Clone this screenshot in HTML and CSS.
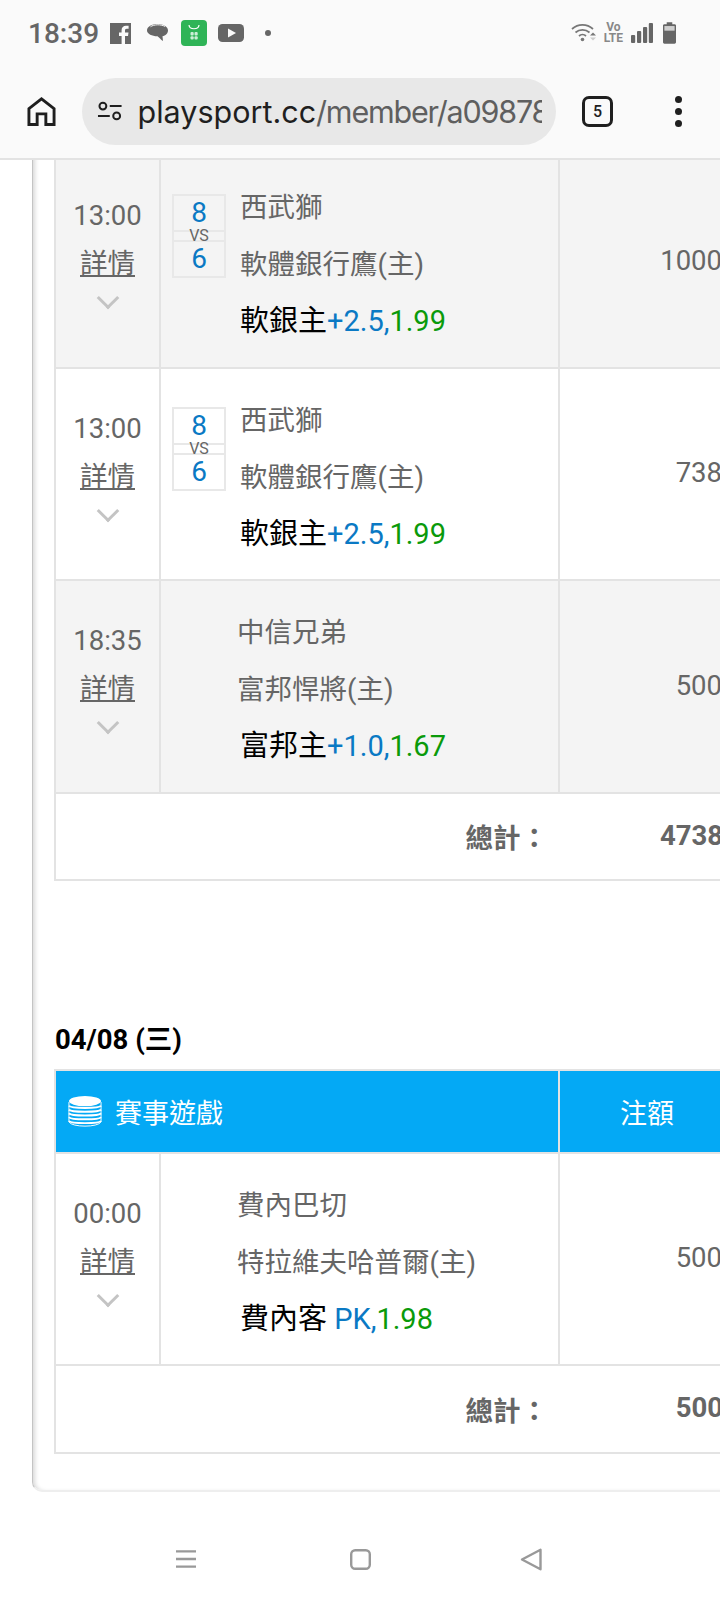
FILE: index.html
```html
<!DOCTYPE html>
<html lang="zh-Hant">
<head>
  <meta charset="UTF-8" />
  <meta name="viewport" content="width=device-width, initial-scale=1.0" />
  <title>playsport.cc</title>
  <link rel="stylesheet" href="styles.css">
</head>
<body>
  <header class="chrome">
    <div class="status-bar">
      <span class="clock">18:39</span>
      <svg class="ic-fb" width="21" height="21" viewBox="0 0 21 21"><path fill="#666" d="M0 0h21v21H15v-8h3l.5-3.4H15V7.5c0-1 .4-1.700 1.800-1.700h1.800V2.800c-.4 0-1.400-.1-2.600-.1-2.600 0-4.400 1.600-4.400 4.500v2.400H9v3.400h2.600v8H0z"/></svg>
      <svg class="ic-msg" width="21" height="20" viewBox="0 0 21 20"><path fill="#666" d="M10.500 1C16 1 21 3.500 21 7.500c0 3-2.500 5-5.500 5.800l.5 4.700c-2-1.200-4-3.500-5.500-4.700C5 13.200 0 11 0 7.500 0 3.500 5 1 10.500 1z"/><path fill="none" stroke="#fafafa" stroke-width="1" d="M3.500 3.800c3-2.400 10-2.800 14.500-.4"/></svg>
      <svg class="ic-store" width="26" height="26" viewBox="0 0 26 26"><rect width="26" height="26" rx="4" fill="#2fb457"/><path fill="none" stroke="#fff" stroke-width="1.200" d="M8 5c.5 5 9.500 5 10 0"/><g fill="#cdeed6"><rect x="9.500" y="12" width="3.200" height="3.400" rx="1"/><rect x="13.500" y="12" width="3.200" height="3.400" rx="1"/><rect x="9.500" y="16.200" width="3.200" height="3.400" rx="1"/><rect x="13.500" y="16.200" width="3.200" height="3.400" rx="1"/></g></svg>
      <svg class="ic-yt" width="26" height="18" viewBox="0 0 26 18"><rect width="26" height="18" rx="4.500" fill="#666"/><path fill="#fafafa" d="M10 4.500l8 4.500-8 4.500z"/></svg>
      <span class="dot"></span>
      <span class="status-right">
        <svg width="25" height="20" viewBox="0 0 25 20"><g fill="none" stroke="#777" stroke-width="1.700"><path d="M1 6c6-5.500 15-5.500 21 0"/><path d="M4.500 9.500c4-3.600 10-3.600 14 0"/><path d="M8 13c2-1.800 5-1.800 7 0"/></g><circle cx="11.500" cy="16.500" r="1.800" fill="#777"/><path fill="#777" d="M19 12.500h6l-3-3z"/><path fill="#ccc" d="M19 14.500h6l-3 3z"/></svg>
        <span class="volte">Vo<br>LTE</span>
        <svg class="ic-signal" width="22" height="20" viewBox="0 0 22 20"><g fill="#666"><rect x="0" y="12" width="4.200" height="8" rx="1"/><rect x="6" y="8" width="4.200" height="12" rx="1"/><rect x="12" y="4" width="4.200" height="16" rx="1"/><rect x="17.800" y="0" width="4.200" height="20" rx="1"/></g></svg>
        <svg width="13" height="22" viewBox="0 0 14 23"><path fill="#666" d="M4 0h6v2h2.500c.8 0 1.500.7 1.500 1.500V21.500c0 .8-.7 1.500-1.500 1.500h-11C.7 23 0 22.300 0 21.500V3.500C0 2.700.7 2 1.500 2H4z"/><rect x="1.500" y="4" width="11" height="5" fill="#cfcfcf"/></svg>
      </span>
    </div>
    <div class="toolbar">
      <svg class="home" width="29" height="31" viewBox="0 0 30 31"><path fill="none" stroke="#1f1f1f" stroke-width="3" d="M2 29V12.500L15 2.500l13 10V29h-8.500v-11h-9v11z"/></svg>
      <div class="omnibox">
        <svg width="26" height="20" viewBox="0 0 26 20"><g fill="none" stroke="#1f1f1f" stroke-width="2"><circle cx="6" cy="5" r="3.500"/><circle cx="20" cy="15" r="3.500"/><path d="M13 5h12M1 15h12"/></g></svg>
        <span class="url"><span class="host">playsport.cc</span>/member/a09878</span>
      </div>
      <span class="tabs">5</span>
      <span class="menu"><i></i><i></i><i></i></span>
    </div>
  </header>

  <main class="viewport">
    <div class="card">
      <table class="bets">
        <colgroup><col class="c-time"><col class="c-game"><col class="c-amount"></colgroup>
        <tr class="alt">
          <td class="time">13:00<a class="more">詳情</a><span class="chev"></span></td>
          <td class="game">
            <div class="game-wrap">
              <div class="score"><b>8</b><em>VS</em><b>6</b></div>
              <div class="teams"><p>西武獅</p><p>軟體銀行鷹(主)</p><p class="pick">軟銀主<span class="line">+2.5,</span><span class="odds">1.99</span></p></div>
            </div>
          </td>
          <td class="amount">1000</td>
        </tr>
        <tr>
          <td class="time">13:00<a class="more">詳情</a><span class="chev"></span></td>
          <td class="game">
            <div class="game-wrap">
              <div class="score"><b>8</b><em>VS</em><b>6</b></div>
              <div class="teams"><p>西武獅</p><p>軟體銀行鷹(主)</p><p class="pick">軟銀主<span class="line">+2.5,</span><span class="odds">1.99</span></p></div>
            </div>
          </td>
          <td class="amount">738</td>
        </tr>
        <tr class="alt">
          <td class="time">18:35<a class="more">詳情</a><span class="chev"></span></td>
          <td class="game">
            <div class="teams plain"><p>中信兄弟</p><p>富邦悍將(主)</p><p class="pick">富邦主<span class="line">+1.0,</span><span class="odds">1.67</span></p></div>
          </td>
          <td class="amount">500</td>
        </tr>
        <tr class="total">
          <td colspan="2">總計：</td>
          <td class="amount">4738</td>
        </tr>
      </table>

      <h3 class="day">04/08 (三)</h3>
      <table class="bets">
        <colgroup><col class="c-time"><col class="c-game"><col class="c-amount"></colgroup>
        <tr class="head">
          <th colspan="2">
            <span class="head-title">
              <svg width="34" height="33" viewBox="0 0 36 34"><ellipse cx="18" cy="6" rx="17" ry="5.500" fill="#fff"/><g fill="none" stroke="#fff" stroke-width="2"><path d="M1 11c2 3 32 3 34 0M1 15c2 3 32 3 34 0M1 19c2 3 32 3 34 0M1 23c2 3 32 3 34 0M1 27c2 3 32 3 34 0"/></g><path d="M1 7v21c3 6 31 6 34 0V7" fill="none" stroke="#fff" stroke-width="1"/></svg>
              賽事遊戲
            </span>
          </th>
          <th class="head-amount">注額</th>
        </tr>
        <tr>
          <td class="time">00:00<a class="more">詳情</a><span class="chev"></span></td>
          <td class="game">
            <div class="teams plain"><p>費內巴切</p><p>特拉維夫哈普爾(主)</p><p class="pick">費內客 <span class="line">PK,</span><span class="odds">1.98</span></p></div>
          </td>
          <td class="amount">500</td>
        </tr>
        <tr class="total">
          <td colspan="2">總計：</td>
          <td class="amount">500</td>
        </tr>
      </table>
    </div>
  </main>

  <footer class="nav-bar">
    <svg width="20" height="20" viewBox="0 0 21 20"><path stroke="#999" stroke-width="2.400" d="M0 2h21M0 10h21M0 18h21"/></svg>
    <svg width="21" height="21" viewBox="0 0 21 21"><rect x="1.200" y="1.200" width="18.600" height="18.600" rx="4" fill="none" stroke="#999" stroke-width="2.400"/></svg>
    <svg width="22" height="23" viewBox="0 0 22 23"><path d="M20.500 1.800v19.400L2 11.500z" fill="none" stroke="#999" stroke-width="2.400" stroke-linejoin="round"/></svg>
  </footer>
</body>
</html>
```

FILE: styles.css
```css
* {
  box-sizing: border-box;
}

body {
  margin: 0;
  width: 720px;
  height: 1600px;
  overflow: hidden;
  display: flex;
  flex-direction: column;
  background: #fff;
  font-family: Roboto, "Noto Sans CJK TC", sans-serif;
  color: #666;
}

/* Phone + browser chrome */
.chrome {
  height: 160px;
  flex: none;
  background: #fafafa;
  border-bottom: 2px solid #e3e3e3;
}

.status-bar {
  height: 66px;
  display: flex;
  align-items: center;
  padding: 0 44px 0 28px;
}

.clock {
  width: 82px;
  font: 500 28px Roboto, sans-serif;
  color: #666;
}

.ic-msg {
  margin-left: 16px;
}

.ic-store {
  margin-left: 13px;
}

.ic-yt {
  margin-left: 11px;
}

.dot {
  width: 6px;
  height: 6px;
  border-radius: 50%;
  background: #666;
  margin-left: 21px;
}

.status-right {
  margin-left: auto;
  display: flex;
  align-items: center;
  gap: 8px;
}

.ic-signal {
  margin-right: 2px;
}

.volte {
  font: 700 12px/11px Roboto, sans-serif;
  color: #888;
  text-align: center;
}

.toolbar {
  height: 92px;
  display: flex;
  align-items: center;
  padding: 0 0 2px 27px;
}

.omnibox {
  margin-left: 26px;
  width: 474px;
  height: 67px;
  border-radius: 34px;
  background: #e8e8e8;
  display: flex;
  align-items: center;
  padding: 0 14px 0 15px;
  gap: 15px;
}

.url {
  font: 400 30.5px "Inter", Roboto, sans-serif;
  color: #5f5f5f;
  letter-spacing: -1.2px;
  overflow: hidden;
  white-space: nowrap;
}

.host {
  color: #1f1f1f;
  letter-spacing: 0;
}

.tabs {
  margin-left: 26px;
  width: 31px;
  height: 31px;
  border: 3px solid #1f1f1f;
  border-radius: 7px;
  display: flex;
  align-items: center;
  justify-content: center;
  font: 500 16px Roboto, sans-serif;
  color: #1f1f1f;
}

.menu {
  margin-left: 62px;
  display: flex;
  flex-direction: column;
  gap: 5px;
}

.menu i {
  width: 7px;
  height: 7px;
  border-radius: 50%;
  background: #1f1f1f;
}

/* Page content */
.viewport {
  flex: 1;
  overflow: hidden;
  padding-left: 32px;
}

.card {
  width: 900px;
  height: 1338px;
  margin-top: -6px;
  border-left: 1px solid #c4c4c4;
  border-bottom: 2px solid #eee;
  border-bottom-left-radius: 10px;
  box-shadow: inset 4px 0 4px -2px #d8d8d8;
  padding-left: 21px;
}

.bets {
  width: 680px;
  table-layout: fixed;
  border-collapse: collapse;
  background: #fff;
}

.c-time {
  width: 105px;
}

.c-game {
  width: 399px;
}

.c-amount {
  width: 176px;
}

.bets td,
.bets th {
  border: 2px solid #e3e3e3;
}

.alt td {
  background: #f4f4f4;
}

.time {
  height: 212.5px;
  text-align: center;
  font-size: 27.5px;
  line-height: 40px;
  vertical-align: top;
  padding-top: 40px;
}

.more {
  display: block;
  margin-top: 8px;
  text-decoration: underline;
}

.chev {
  display: block;
  width: 16px;
  height: 16px;
  margin: 6px auto 0;
  border-right: 3.500px solid #c4c4c4;
  border-bottom: 3.500px solid #c4c4c4;
  transform: rotate(45deg);
}

.game {
  padding: 23px 0 0 11px;
  vertical-align: top;
  font-size: 27.5px;
}

.game-wrap {
  display: flex;
  gap: 14px;
}

.score {
  width: 54px;
  height: 84px;
  margin-top: 15px;
  flex: none;
  border: 2px solid #e8e8e8;
  display: flex;
  flex-direction: column;
  text-align: center;
  color: #0a79c4;
}

.score b {
  font-weight: 400;
  font-size: 28px;
  line-height: 34px;
  height: 34px;
}

.score em {
  font-style: normal;
  font-size: 16px;
  line-height: 8px;
  height: 14px;
  color: #666;
  border-top: 2px solid #e8e8e8;
  border-bottom: 2px solid #e8e8e8;
}

.teams p {
  margin: 0;
  height: 57px;
  line-height: 57px;
  white-space: nowrap;
}

.teams.plain {
  padding-left: 65px;
}

.teams .pick {
  color: #000;
  font-size: 29px;
}

.plain .pick {
  margin-left: 3px;
}

.line {
  color: #0a79c4;
}

.odds {
  color: #0a9a0a;
}

.amount {
  text-align: right;
  font-size: 27.5px;
  padding: 0 12px 2px 0;
}

.bets .total td {
  height: 87.5px;
  background: #fff;
  font-weight: 700;
  text-align: right;
  font-size: 27.5px;
  border-left: 0;
  border-right: 0;
}

.bets .total td:first-child {
  padding-right: 11px;
  border-left: 2px solid #e3e3e3;
}

.day {
  margin: 141px 0 0 1px;
  height: 47px;
  font-size: 27.5px;
  line-height: 36px;
  color: #000;
}

.head th {
  height: 82.5px;
  background: #04a9f5;
  color: #fff;
  font-weight: 400;
  font-size: 27px;
}

.head-title {
  display: flex;
  align-items: center;
  gap: 13px;
  padding-left: 11px;
}

.head-amount {
  text-align: center;
}

.nav-bar {
  flex: none;
  height: 108px;
  display: grid;
  grid-template-columns: 174px 170px auto;
  align-items: center;
  padding: 26px 0 0 176px;
  background: #fff;
}
```
